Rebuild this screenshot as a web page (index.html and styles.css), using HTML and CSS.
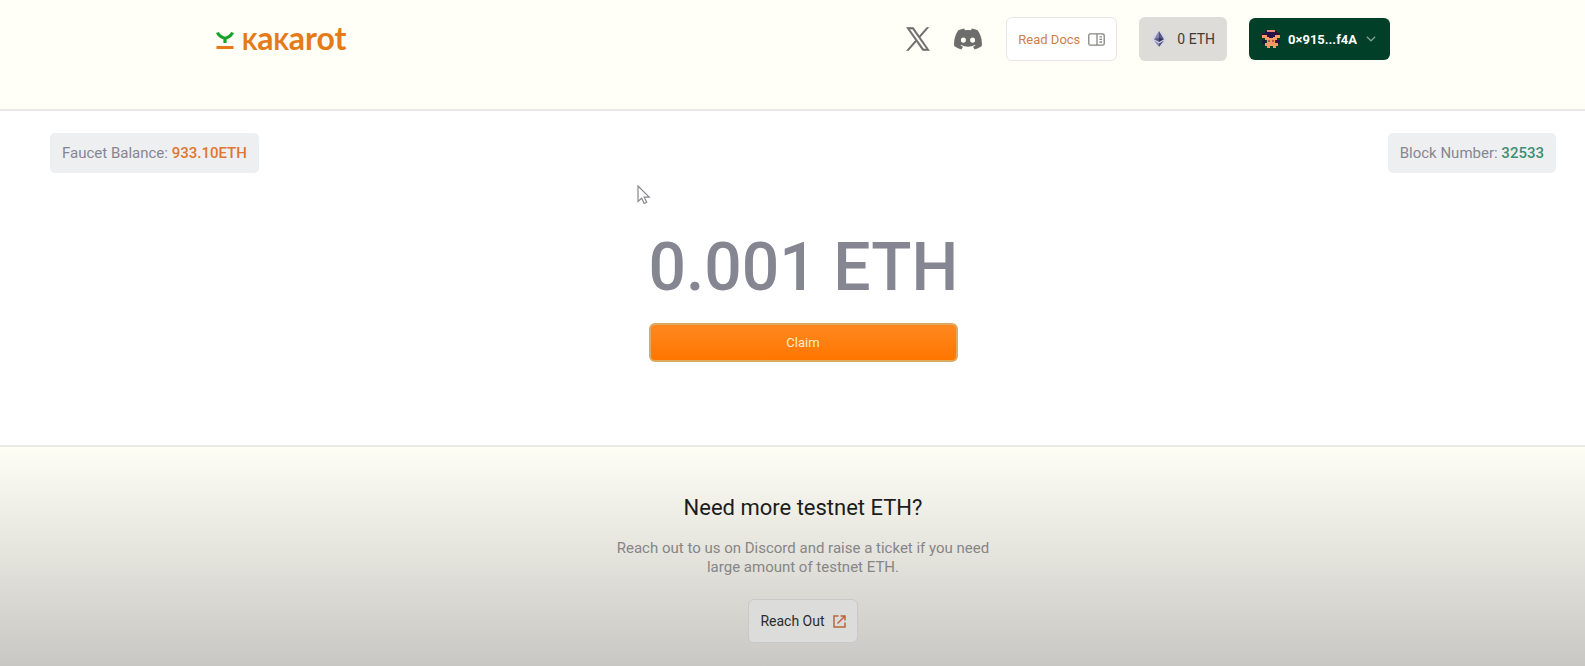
FILE: index.html
```html
<!DOCTYPE html>
<html lang="en">
<head>
<meta charset="utf-8">
<meta name="viewport" content="width=device-width, initial-scale=1">
<title>Kakarot Faucet</title>
<link rel="stylesheet" href="styles.css">
</head>
<body>
<header class="header">
  <div class="header-inner">
    <a class="logo" href="#">
      <svg class="logo-mark" width="18" height="19" viewBox="0 0 18 19" fill="none" aria-hidden="true">
        <path d="M1.500 1.500C2.500 4.500 5 6 9 7.500M16.500 1.500C15.500 4.500 13 6 9 7.500V12" stroke="#16a32b" stroke-width="3.200"/>
        <path d="M.500 16.500H17.500" stroke="#e57a17" stroke-width="3"/>
      </svg>
      <span class="logo-text"><span class="logo-k">k</span>a<span class="logo-k">k</span>arot</span>
    </a>
    <nav class="nav">
      <a class="social" href="#" aria-label="X">
        <svg width="24" height="24" viewBox="0 0 24 24" fill="#6d6d6b"><path d="M14.200 10.200 22.700.500h-2L13.300 8.900 7.400.500H.600l8.900 12.800L.600 23.500h2l7.800-8.900 6.200 8.900h6.800zM11.400 13.300l-.900-1.300L3.400 2h3.100l5.800 8.200.900 1.300 7.500 10.600h-3.100z" stroke="#6d6d6b" stroke-width=".6"/></svg>
      </a>
      <a class="social" href="#" aria-label="Discord">
        <svg width="28" height="22" viewBox="0 0 28 22" fill="#6d6d6b"><path fill-rule="evenodd" d="M23.700 2.300A23 23 0 0 0 17.900.5l-.9 1.800a21 21 0 0 0-6 0L10.100.5a23 23 0 0 0-5.800 1.800C.7 7.600-.3 12.800.2 17.900a23 23 0 0 0 7.100 3.600l1.700-2.700-2.500-1.200.6-.5c4.600 2.100 9.200 2.100 13.800 0l.6.500-2.500 1.200 1.700 2.700a23 23 0 0 0 7.100-3.600c.6-5.900-1-11-4.100-15.600zM9.400 14.800a2.500 2.700 0 1 1 0-5.400 2.500 2.700 0 0 1 0 5.400zm9.200 0a2.500 2.700 0 1 1 0-5.400 2.500 2.700 0 0 1 0 5.400z"/></svg>
      </a>
      <a class="btn docs" href="#">Read Docs
        <svg width="17" height="13" viewBox="0 0 17 13" fill="none" stroke="#85857f" stroke-width="1.300" aria-hidden="true"><rect x=".8" y=".8" width="15.400" height="11.400" rx="1.500"/><path d="M9 1v11M11.500 3.800h2.500M11.500 6.400h2.500M11.500 9h2.500"/></svg>
      </a>
      <div class="btn balance">
        <svg width="16" height="18" viewBox="0 0 16 18" aria-hidden="true"><circle cx="8" cy="9" r="7" fill="#d6d6e6"/><path d="M8 1 3 9.300l5-2.200z" fill="#8583b0"/><path d="m8 1 5 8.300-5-2.200z" fill="#55527f"/><path d="m3 9.300 5-2.200V12z" fill="#5e5b8a"/><path d="m13 9.300-5-2.200V12z" fill="#353260"/><path d="m3 10.500 5 3V17z" fill="#8583b0"/><path d="m13 10.500-5 3V17z" fill="#55527f"/></svg>
        0 ETH
      </div>
      <button class="btn wallet" type="button">
        <svg width="20" height="20" viewBox="0 0 20 20" aria-hidden="true"><path d="M4 2h12v2h3v5H1V4h3zM1 11h4v4H1zM15 11h4v4h-4z" fill="#2a1145"/><path d="M6 1h8v2H6z" fill="#e58b75"/><path d="M1 6h5v2h2v1h4V8h2V6h5v3h-3v2h-2v3h3v3h-2v2h-3v-2H9v2H6v-2H4v-3h2v-3H4V9H1z" fill="#f79a63"/><path d="M7 11h2v2H7zM11 11h2v2h-2z" fill="#b3573f"/></svg>
        0×915...f4A
        <svg class="chevron" width="10" height="6" viewBox="0 0 10 6" fill="none" stroke="#7fa08f" stroke-width="1.300" aria-hidden="true"><path d="m.8.800 4.200 4 4.200-4"/></svg>
      </button>
    </nav>
  </div>
</header>
<main class="faucet">
  <div class="stats">
    <div class="stat">Faucet Balance: <span class="stat-orange">933.10ETH</span></div>
    <div class="stat">Block Number: <span class="stat-green">32533</span></div>
  </div>
  <div class="claim">
    <h1 class="amount">0.001 ETH</h1>
    <button class="claim-btn" type="button">Claim</button>
  </div>
  <svg class="cursor" width="14" height="20" viewBox="0 0 14 20" fill="#fff" stroke="#88888c" stroke-width="1.200" aria-hidden="true"><path d="M1 1v15.500l3.600-3.300 2.600 5.300 2.500-1.200-2.500-5.100h5z"/></svg>
</main>
<section class="more">
  <h2 class="more-title">Need more testnet ETH?</h2>
  <p class="more-text">Reach out to us on Discord and raise a ticket if you need large amount of testnet ETH.</p>
  <a class="btn reach" href="#">Reach Out
    <svg width="13" height="13" viewBox="0 0 13 13" fill="none" stroke="#b9653c" stroke-width="1.500" aria-hidden="true"><path d="M5.500 1H1v11h11V7.500M7.500 1H12v4.500M12 1 4.500 8.500"/></svg>
  </a>
</section>
</body>
</html>
```
FILE: styles.css
```css
* {
  box-sizing: border-box;
}

body {
  margin: 0;
  min-height: 100vh;
  display: flex;
  flex-direction: column;
  font-family: Roboto, "Liberation Sans", sans-serif;
  font-size: 15px;
  color: #1c1c1c;
  background: #fff;
}

a {
  color: inherit;
  text-decoration: none;
}

.header,
.faucet,
.more {
  padding-left: 50px;
  padding-right: 29px;
}

.header {
  background: #fffef7;
  border-bottom: 2px solid #e9e8e4;
  padding-top: 17px;
  padding-bottom: 48px;
}

.header-inner {
  max-width: 1174px;
  margin: 0 auto;
  display: flex;
  align-items: center;
  justify-content: space-between;
}

.logo {
  display: flex;
  align-items: center;
  gap: 8px;
  padding-top: 2px;
}

.logo-text {
  font-family: Lato, sans-serif;
  font-size: 32px;
  line-height: 32px;
  font-weight: 700;
  color: #e57a17;
  padding-bottom: 4px;
}

.logo-k {
  font-variant-caps: small-caps;
  font-weight: 900;
}

.nav {
  display: flex;
  align-items: center;
  gap: 22px;
}

.social {
  display: flex;
  margin-right: 2px;
}

.btn {
  display: flex;
  align-items: center;
  height: 44px;
  padding: 0 11px;
  gap: 8px;
  border: 1px solid transparent;
  border-radius: 6px;
  font-family: inherit;
  font-size: 14px;
  white-space: nowrap;
}

.docs {
  background: #fff;
  border-color: #e6e6e6;
  color: #cf7f48;
  font-size: 13px;
}

.balance {
  background: #dedcd8;
  color: #3c3c3a;
  gap: 10px;
}

.wallet {
  height: 42px;
  gap: 7px;
  background: #023f28;
  color: #fff;
  font-size: 13px;
  font-weight: 700;
}

.chevron {
  margin: 0 2px;
}

.faucet {
  position: relative;
  padding-top: 22px;
  padding-bottom: 83px;
  border-bottom: 2px solid #e9e9e5;
}

.stats {
  display: flex;
  justify-content: space-between;
}

.stat {
  padding: 0 12px;
  line-height: 40px;
  border-radius: 5px;
  background: #eeeff1;
  color: #868692;
}

.stat-orange {
  color: #e0762f;
  font-weight: 500;
}

.stat-green {
  color: #3f8f74;
  font-weight: 500;
}

.claim {
  width: 309px;
  margin: 55px auto 0;
}

.amount {
  margin: 0 0 15px;
  font-size: 66px;
  line-height: 80px;
  font-weight: 500;
  color: #868592;
  text-align: center;
  white-space: nowrap;
}

.claim-btn {
  display: block;
  width: 100%;
  height: 39px;
  border: 2px solid #dcab5f;
  border-radius: 6px;
  background: linear-gradient(#ff881f, #ff7600);
  color: #ffeccb;
  font-family: inherit;
  font-size: 13px;
}

.cursor {
  position: absolute;
  left: 637px;
  top: 74px;
}

.more {
  flex: 1;
  display: flex;
  flex-direction: column;
  align-items: center;
  padding-top: 46px;
  padding-bottom: 24px;
  background: linear-gradient(#fffef5, #c8c7c3);
  text-align: center;
}

.more-title {
  margin: 0;
  font-size: 22px;
  line-height: 30px;
  font-weight: 400;
}

.more-text {
  max-width: 380px;
  margin: 16px 0 22px;
  font-size: 15px;
  line-height: 19px;
  color: #868686;
}

.reach {
  background: #dcdcdb;
  border-color: #c9c9ca;
  color: #2b2b2b;
}
```
